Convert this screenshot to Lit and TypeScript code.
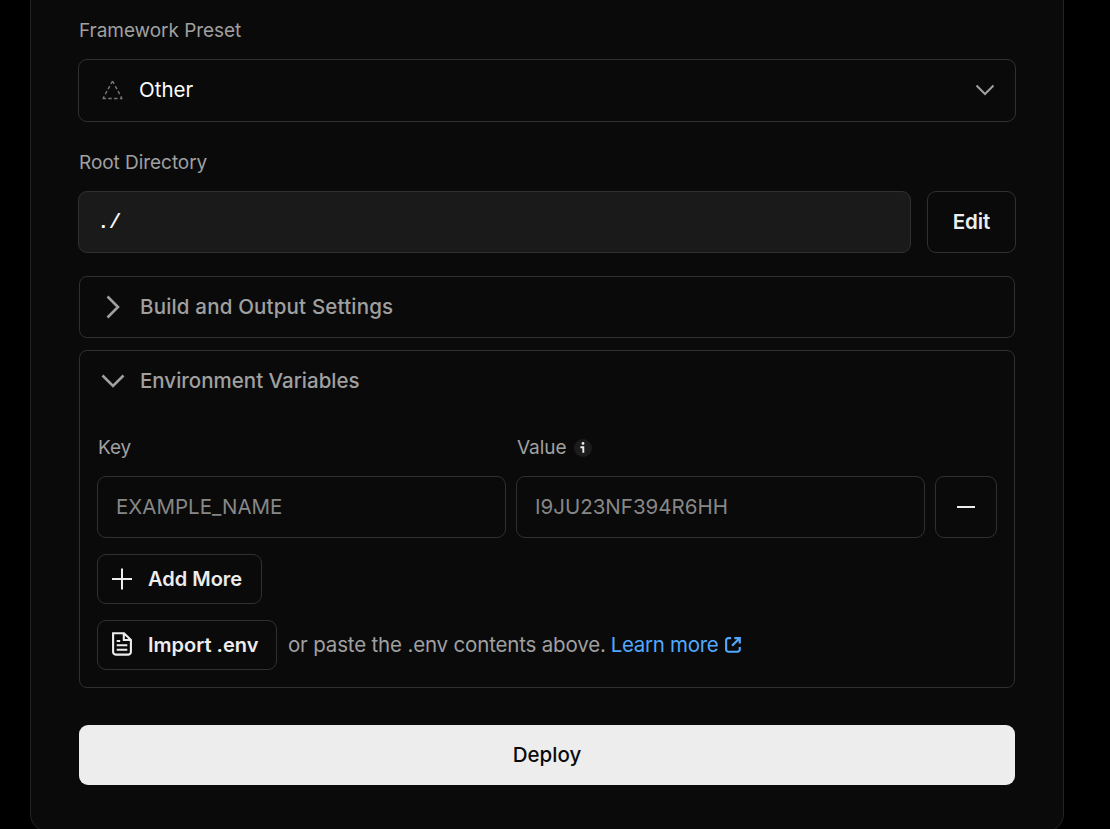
import { LitElement, html, css } from "lit";
import { customElement } from "lit/decorators.js";

@customElement("app-root")
export class AppRoot extends LitElement {
  static styles = css`
    :host {
      display: block;
      height: 829px;
      overflow: hidden;
      background: #000;
      color: #ededed;
      font-family: Inter, "Liberation Sans", sans-serif;
      font-size: 20.5px;
    }
    * { box-sizing: border-box; }
    svg { display: block; fill: none; flex: none; }
    span { white-space: nowrap; }
    .panel {
      margin: -20px 46px 0 30px;
      height: 852px;
      padding: 36px 47px 0;
      background: #0a0a0a;
      border: 1px solid #242424;
      border-radius: 18px;
      display: flex;
      flex-direction: column;
    }
    .label {
      height: 28px;
      line-height: 28px;
      padding-left: 1px;
      font-size: 19px;
      letter-spacing: -0.05px;
      color: #a0a0a0;
    }
    .box {
      border: 1px solid #303030;
      border-radius: 9px;
      display: flex;
      align-items: center;
      height: 62px;
      padding-bottom: 1px;
      flex: none;
    }
    .select { height: 63px; margin: 14px 0 27px; padding: 0 20px 2px 23px; }
    .select .name { margin-left: 16px; flex: 1; color: #fff; }
    .row { display: flex; flex: none; }
    .root { margin-top: 14px; gap: 16px; }
    .path {
      flex: 1;
      background: #1a1a1a;
      padding: 1px 0 0 18px;
      font-family: "Liberation Mono", monospace;
      font-size: 21px;
      color: #fff;
    }
    .path span { letter-spacing: -0.8px; -webkit-text-stroke: 0.2px #fff; }
    .edit { width: 89px; justify-content: center; font-weight: 600; }
    .edit span { letter-spacing: -0.1px; }
    .section {
      border: 1px solid #303030;
      border-radius: 8px;
      margin: 0 1px;
      flex: none;
    }
    .build { height: 62px; margin-top: 23px; }
    .env { height: 338px; margin-top: 12px; padding: 0 17px; }
    .head {
      display: flex;
      align-items: center;
      height: 60px;
      padding-left: 22px;
      color: #a0a0a0;
      font-weight: 500;
    }
    .head span { padding-bottom: 2px; }
    .build .head span { letter-spacing: 0.18px; }
    .env .head { padding-left: 5px; }
    .head .icon { width: 22px; display: flex; justify-content: center; margin-right: 16px; }
    .fields { display: grid; grid-template-columns: 409px 409px 62px; column-gap: 10px; margin-top: 23px; }
    .fields .label { display: flex; align-items: center; }
    .fields .box { margin-top: 14px; }
    .field { padding-left: 18px; color: #878787; }
    .info { margin-left: 8px; }
    .remove { justify-content: center; padding-bottom: 0; }
    .btn { height: 50px; padding: 0 0 1px 14px; font-weight: 600; font-size: 20px; }
    .btn span { margin-left: 16px; letter-spacing: 0; }
    .add { width: 165px; margin-top: 16px; }
    .import { width: 180px; }
    .last { margin-top: 16px; align-items: center; color: #a0a0a0; }
    .last .btn { color: #ededed; }
    .note { margin-left: 11px; padding-bottom: 2px; letter-spacing: -0.17px; }
    .link { color: #52a8ff; margin: 0 7px 0 5px; padding-bottom: 2px; letter-spacing: -0.3px; }
    .last svg { margin-bottom: 1px; }
    .deploy {
      height: 60px;
      margin: 37px 1px 0;
      padding-bottom: 2px;
      border-radius: 9px;
      background: #ededed;
      color: #0a0a0a;
      font-weight: 500;
      display: flex;
      align-items: center;
      justify-content: center;
      flex: none;
    }
  `;

  render() {
    return html`
      <div class="panel">
        <div class="label"><span>Framework Preset</span></div>
        <div class="box select">
          <svg width="21" height="20" viewBox="0 0 21 20" stroke="#777" stroke-width="1.4" stroke-dasharray="3.4 2.4">
            <path d="M10.5 1 L20 18.5 M10.5 1 L1 18.5 M.5 18.5 H20.5" />
          </svg>
          <span class="name">Other</span>
          <svg width="20" height="12" viewBox="0 0 20 12" stroke="#a0a0a0" stroke-width="2"><path d="M1.5 1.5 L10 10 L18.5 1.5" /></svg>
        </div>
        <div class="label"><span>Root Directory</span></div>
        <div class="row root">
          <div class="box path"><span>./</span></div>
          <div class="box edit"><span>Edit</span></div>
        </div>
        <div class="section build">
          <div class="head">
            <div class="icon">
              <svg width="14" height="24" viewBox="0 0 14 24" stroke="#a0a0a0" stroke-width="2.6"><path d="M1.5 1.5 L12 12 L1.5 22.5" /></svg>
            </div>
            <span>Build and Output Settings</span>
          </div>
        </div>
        <div class="section env">
          <div class="head">
            <div class="icon">
              <svg width="24" height="14" viewBox="0 0 24 14" stroke="#a0a0a0" stroke-width="2.6"><path d="M1.5 1.5 L12 12 L22.5 1.5" /></svg>
            </div>
            <span>Environment Variables</span>
          </div>
          <div class="fields">
            <div class="label"><span>Key</span></div>
            <div class="label">
              <span>Value</span>
              <svg class="info" width="18" height="18" viewBox="0 0 18 18">
                <circle cx="9" cy="9" r="9" fill="#1c1c1c" />
                <circle cx="9" cy="4.4" r="1.4" fill="#ededed" />
                <path d="M6.4 8.2 H9.3 V13.8" stroke="#ededed" stroke-width="1.9" />
              </svg>
            </div>
            <div></div>
            <div class="box field"><span>EXAMPLE_NAME</span></div>
            <div class="box field"><span>I9JU23NF394R6HH</span></div>
            <div class="box remove">
              <svg width="18" height="2" viewBox="0 0 18 2"><path d="M0 1 H18" stroke="#ededed" stroke-width="2" /></svg>
            </div>
          </div>
          <div class="box btn add">
            <svg width="20" height="22" viewBox="0 0 20 22" stroke="#ededed" stroke-width="2"><path d="M0 11 H20 M10 .5 V21.5" /></svg>
            <span>Add More</span>
          </div>
          <div class="row last">
            <div class="box btn import">
              <svg width="20" height="24" viewBox="0 0 20 24" stroke="#ededed" stroke-width="2.1">
                <path d="M1.1 1.2 H12 L18.9 8 V20 A2.5 2.5 0 0 1 16.4 22.6 H3.6 A2.5 2.5 0 0 1 1.1 20 Z M11.8 1.5 V8 H18.5" />
                <path d="M4.7 9 H8.2 M4.7 13.3 H15.3 M4.7 17.7 H15.3" />
              </svg>
              <span>Import .env</span>
            </div>
            <span class="note">or paste the .env contents above.</span>
            <span class="link">Learn more</span>
            <svg width="16" height="16" viewBox="0 0 17 17" stroke="#52a8ff" stroke-width="2.3">
              <path d="M6.5 1.2 H3.7 A2.5 2.5 0 0 0 1.2 3.7 V13.2 A2.5 2.5 0 0 0 3.7 15.7 H13.2 A2.5 2.5 0 0 0 15.7 13.2 V10.5 M10 1.2 H15.7 V7 M15.5 1.4 L7.5 9.4" />
            </svg>
          </div>
        </div>
        <div class="deploy"><span>Deploy</span></div>
      </div>
    `;
  }
}
